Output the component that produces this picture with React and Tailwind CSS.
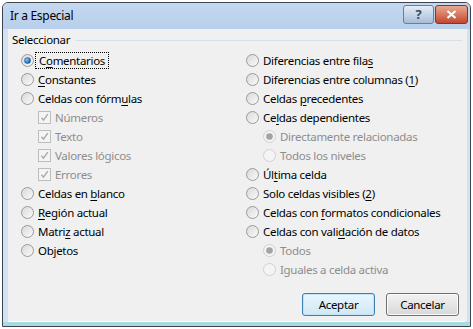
import React from 'react';

const FONT = { fontFamily: '"Noto Sans", "Open Sans", sans-serif' };

const Radio = ({ checked, disabled }) => (
    <svg width="13" height="13" viewBox="0 0 13 13" className="shrink-0">
        <defs>
            <linearGradient id="rf" x1="0" y1="0" x2="1" y2="1">
                <stop offset="0" stopColor="#d8d8d8" />
                <stop offset="1" stopColor="#fbfbfb" />
            </linearGradient>
            <radialGradient id="rd" cx="0.4" cy="0.4" r="0.7">
                <stop offset="0" stopColor="#8cc4f0" />
                <stop offset="0.6" stopColor="#2a78c0" />
                <stop offset="1" stopColor="#0d3f73" />
            </radialGradient>
        </defs>
        <circle cx="6.5" cy="6.5" r="6" fill={disabled ? '#f4f4f4' : 'url(#rf)'} stroke={disabled ? '#d0d0d0' : '#9a9a9a'} />
        {checked && <circle cx="6.5" cy="6.5" r="3.3" fill={disabled ? '#a3a3a3' : 'url(#rd)'} />}
    </svg>
);

const Check = () => (
    <svg width="13" height="13" viewBox="0 0 13 13" className="shrink-0">
        <rect x="0.5" y="0.5" width="12" height="12" fill="#f4f4f4" stroke="#bdbdbd" />
        <path d="M3.5 6.8 L5.5 9.2 L9.8 3.2" fill="none" stroke="#a9a9a9" strokeWidth="1.4" />
    </svg>
);

const U = ({ children }) => <span className="underline underline-offset-2">{children}</span>;

const Row = ({ indent, children }) => (
    <div className={`flex items-center h-[19px] gap-[4px] ${indent ? 'pl-[17px]' : ''}`}>{children}</div>
);

const Label = ({ disabled, children }) => (
    <span className={`leading-none whitespace-nowrap ${disabled ? 'text-[#8d8d8d]' : 'text-black'}`}>{children}</span>
);

export default function App() {
    return (
        <div className="w-[473px] h-[329px] bg-white overflow-hidden text-[11.5px] tracking-[-0.3px]" style={FONT}>
            <div className="ml-[2px] mt-[2px] w-[469px] h-[325px] border border-[#3d4450] rounded-t-[6px] bg-[#d3e2f2] flex flex-col">
                <div className="h-[26px] flex items-center justify-between pl-[7px] pr-[2px] rounded-t-[5px] bg-gradient-to-b from-[#c4d8ef] to-[#b8cfeb]">
                    <span className="text-[12px] text-black">Ir a Especial</span>
                    <div className="flex items-start self-start mt-[2px] gap-[1px]">
                        <div className="w-[31px] h-[19px] rounded-[3px] border border-[#6d7e94] bg-gradient-to-b from-[#e4ecf6] to-[#a9bdd6] flex items-center justify-center text-[#3a4a60] text-[13px] font-bold leading-none">?</div>
                        <div className="w-[33px] h-[19px] rounded-[3px] border border-[#7a3a30] bg-gradient-to-b from-[#e9a890] to-[#c2452c] flex items-center justify-center">
                            <svg width="11" height="9" viewBox="0 0 11 9">
                                <path d="M1.5 1 L9.5 8 M9.5 1 L1.5 8" stroke="#fff" strokeWidth="2.2" />
                            </svg>
                        </div>
                    </div>
                </div>
                <div className="ml-[5px] mr-[3px] h-[292px] bg-[#f0f0f0] px-[4px] pt-[3px] flex flex-col">
                    <div className="flex items-center h-[16px] gap-[6px]">
                        <span className="text-black">Seleccionar</span>
                        <div className="flex-1 h-px bg-[#d5dfe5] mr-[1px]" />
                    </div>
                    <div className="grid grid-cols-[225px_1fr] pl-[9px] mt-[3px]">
                        <div className="flex flex-col">
                            <Row><Radio checked /><span className="leading-none outline-1 outline-dotted outline-black outline-offset-[2px] px-[1px]">C<U>o</U>mentarios</span></Row>
                            <Row><Radio /><Label><U>C</U>onstantes</Label></Row>
                            <Row><Radio /><Label>Celdas con fórm<U>u</U>las</Label></Row>
                            <Row indent><Check /><Label disabled>Números</Label></Row>
                            <Row indent><Check /><Label disabled>Texto</Label></Row>
                            <Row indent><Check /><Label disabled>Valores lógicos</Label></Row>
                            <Row indent><Check /><Label disabled>Errores</Label></Row>
                            <Row><Radio /><Label>Celdas en <U>b</U>lanco</Label></Row>
                            <Row><Radio /><Label><U>R</U>egión actual</Label></Row>
                            <Row><Radio /><Label>Matri<U>z</U> actual</Label></Row>
                            <Row><Radio /><Label>Ob<U>j</U>etos</Label></Row>
                        </div>
                        <div className="flex flex-col">
                            <Row><Radio /><Label>Diferencias entre fila<U>s</U></Label></Row>
                            <Row><Radio /><Label>Diferencias entre columnas (<U>1</U>)</Label></Row>
                            <Row><Radio /><Label>Celdas <U>p</U>recedentes</Label></Row>
                            <Row><Radio /><Label>Ce<U>l</U>das dependientes</Label></Row>
                            <Row indent><Radio checked disabled /><Label disabled>Directamente relacionadas</Label></Row>
                            <Row indent><Radio disabled /><Label disabled>Todos los niveles</Label></Row>
                            <Row><Radio /><Label>Úl<U>t</U>ima celda</Label></Row>
                            <Row><Radio /><Label>Solo celdas visibles (<U>2</U>)</Label></Row>
                            <Row><Radio /><Label>Celdas con <U>f</U>ormatos condicionales</Label></Row>
                            <Row><Radio /><Label>Celdas con vali<U>d</U>ación de datos</Label></Row>
                            <Row indent><Radio checked disabled /><Label disabled>Todos</Label></Row>
                            <Row indent><Radio disabled /><Label disabled>Iguales a celda activa</Label></Row>
                        </div>
                    </div>
                    <div className="flex justify-end gap-[11px] mt-[14px] pr-[4px]">
                        <button className="w-[73px] h-[23px] rounded-[3px] border border-[#3c7fb1] bg-gradient-to-b from-[#eaf6fd] to-[#d0e8f6] shadow-[inset_0_0_0_1px_#bfe4f8] text-black">Aceptar</button>
                        <button className="w-[73px] h-[23px] rounded-[3px] border border-[#707070] bg-gradient-to-b from-[#f2f2f2] to-[#d8d8d8] shadow-[inset_0_0_0_1px_#fbfbfb] text-black">Cancelar</button>
                    </div>
                </div>
                <div className="mx-[5px] h-px bg-white" />
                <div className="flex-1 bg-[#a6dbe6]" />
            </div>
        </div>
    );
}
